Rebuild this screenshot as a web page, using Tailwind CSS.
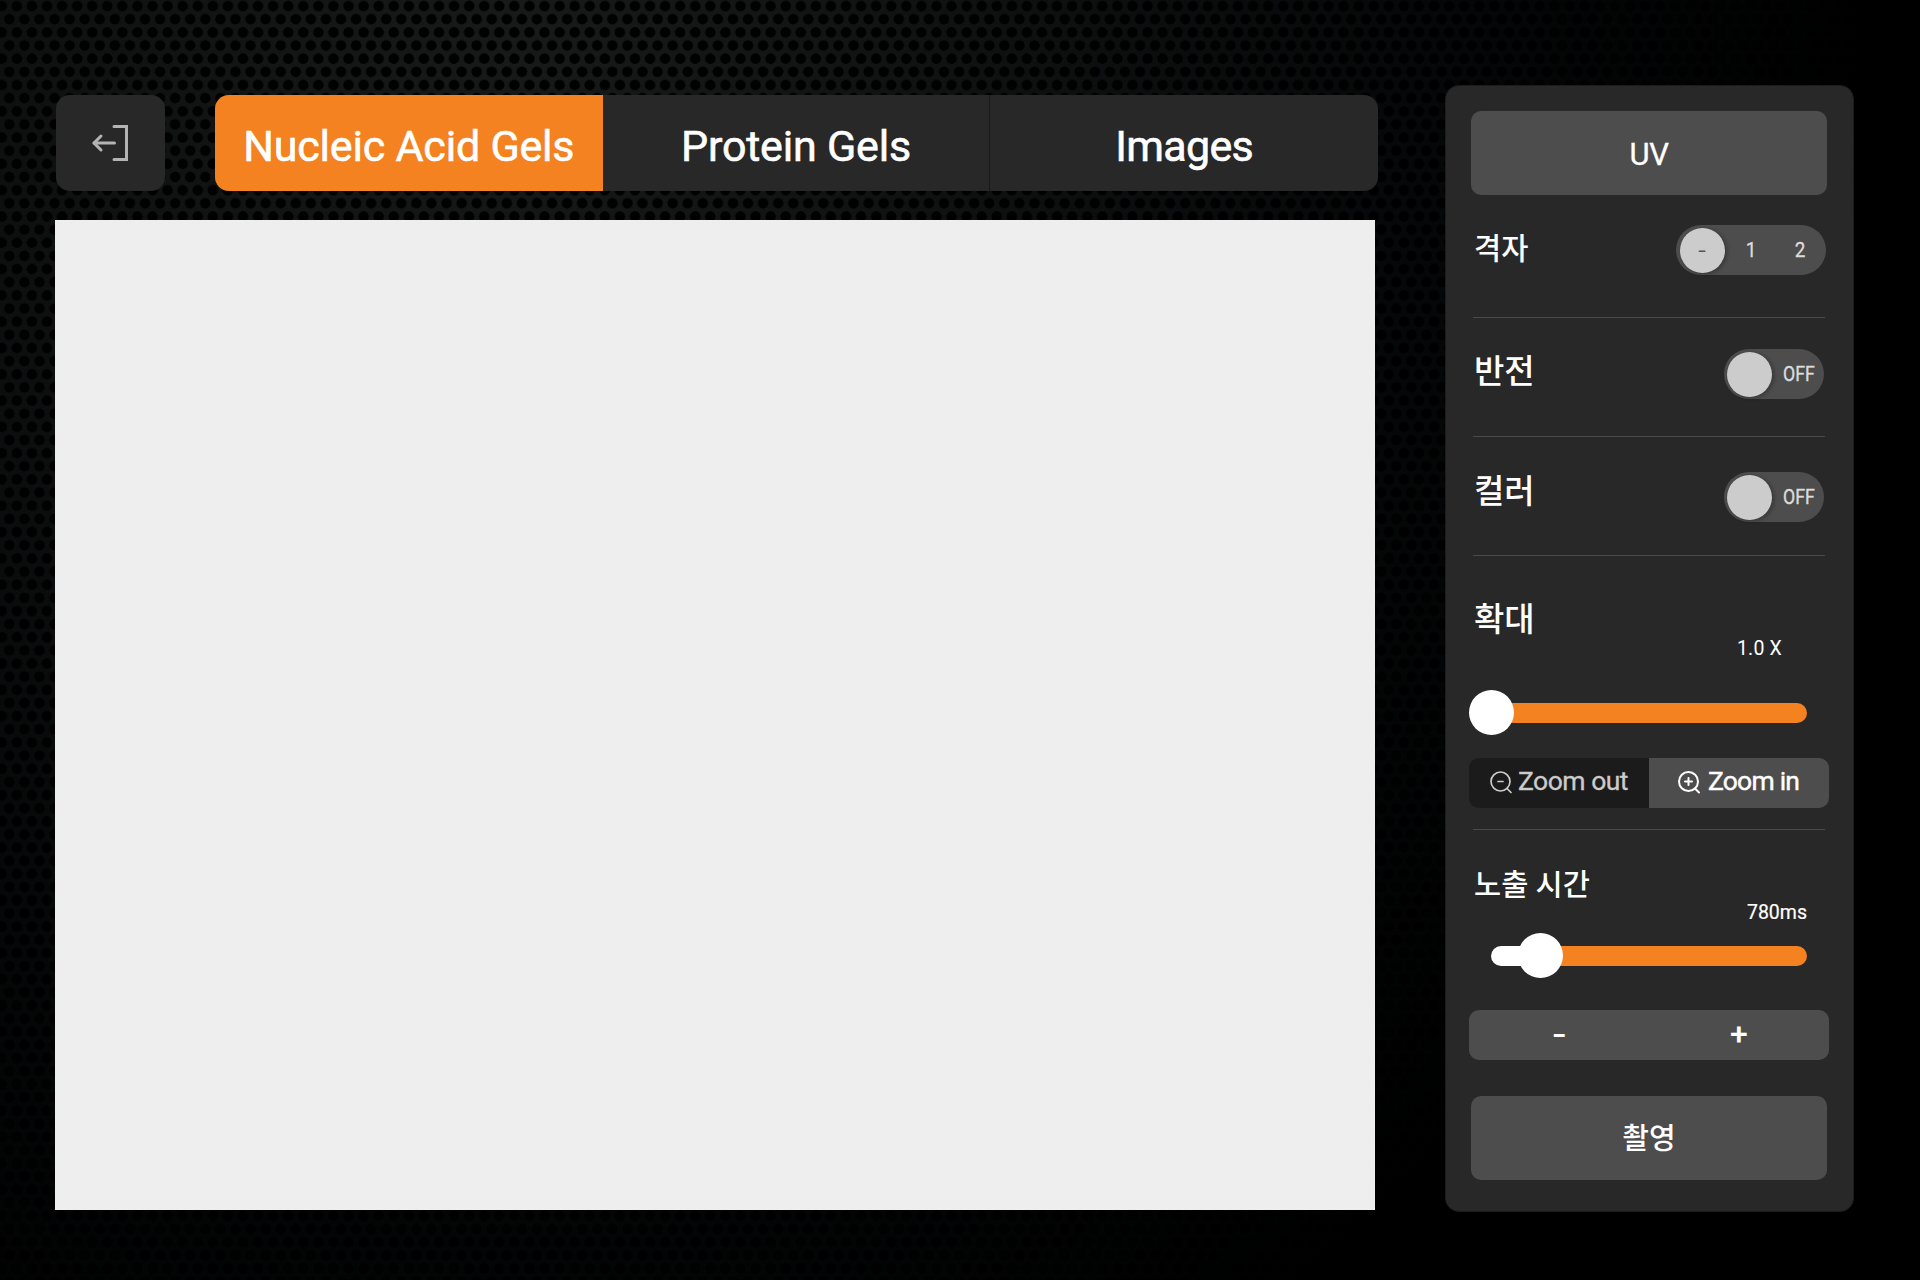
<!DOCTYPE html>
<html lang="ko">
<head>
<meta charset="utf-8">
<title>Gel Imager</title>
<script src="https://cdn.jsdelivr.net/npm/@tailwindcss/browser@4"></script>
</head>
<body class="bg-black">
<div class="relative flex h-[1280px] w-[1920px] overflow-hidden bg-black font-['Roboto','Noto_Sans_CJK_KR',sans-serif] leading-none text-white">
  <!-- perforated metal backdrop -->
  <svg class="absolute inset-0" width="1920" height="1280" aria-hidden="true">
    <defs>
      <radialGradient id="glow" gradientUnits="userSpaceOnUse" cx="0" cy="0" r="1" gradientTransform="translate(520 20) scale(1350 1560)">
        <stop offset="0" stop-color="#181919"/>
        <stop offset="0.36" stop-color="#0f1111"/>
        <stop offset="0.68" stop-color="#050708"/>
        <stop offset="1" stop-color="#000"/>
      </radialGradient>
      <pattern id="holes" patternUnits="userSpaceOnUse" x="9.3" y="-7.1" width="15.076" height="26.3">
        <circle cx="7.54" cy="13.15" r="5.3"/>
        <circle cx="0" cy="0" r="5.3"/><circle cx="15.076" cy="0" r="5.3"/>
        <circle cx="0" cy="26.3" r="5.3"/><circle cx="15.076" cy="26.3" r="5.3"/>
      </pattern>
    </defs>
    <rect width="1920" height="1280" fill="url(#glow)"/>
    <rect width="1920" height="1280" fill="url(#holes)"/>
  </svg>

  <main class="relative ml-[55px] w-[1323px] pt-[95px]">
    <div class="flex h-24 pl-px">
      <button class="flex w-[109px] items-center justify-center rounded-[14px] bg-[#282828] pr-0.5">
        <svg width="38" height="38" viewBox="0 0 38 38" fill="none" stroke="#b4b4b4" stroke-width="3" stroke-linecap="round" stroke-linejoin="miter">
          <path d="M23 2.5H35.5V35.5H23"/><path d="M23.5 19H3"/><path d="M10 12L3 19L10 26" stroke-linejoin="round"/>
        </svg>
      </button>
      <nav class="ml-[50px] grid w-[1163px] grid-cols-3 overflow-hidden rounded-[14px] bg-[#282828] text-[43px] tracking-[-0.2px] [-webkit-text-stroke:0.6px_white]">
        <button class="bg-[#f48221] pt-1.5">Nucleic Acid Gels</button>
        <button class="border-r border-[#181818] pt-1.5">Protein Gels</button>
        <button class="pt-1.5 tracking-[-0.7px]">Images</button>
      </nav>
    </div>
    <div class="mt-[29px] h-[990px] w-[1320px] bg-[#eeeeee]"></div>
  </main>

  <aside class="relative isolate mt-[85px] ml-[67px] flex h-[1127px] w-[409px] flex-col rounded-[14px] border border-[#1c1c1c] bg-[#282828] pt-[25px] pr-6 pl-[23px]">
    <button class="mx-0.5 h-[84px] shrink-0 rounded-[10px] bg-[#4d4d4d] pt-0.5 text-[31px] tracking-[-0.5px] [-webkit-text-stroke:0.3px_white]">UV</button>
    <div class="mx-1 flex h-[122px] shrink-0 justify-between pt-[30px]">
      <span class="mt-[10px] ml-px text-[29.5px] font-medium">격자</span>
      <div class="-mr-px grid h-[50px] w-[150px] grid-cols-3 items-center rounded-full bg-[#4d4d4d] text-center text-[21px] text-[#dcdcdc]">
        <span class="ml-[3.5px] flex size-[45px] items-center justify-center rounded-full bg-[#cccccc] text-[#555] shadow-[2px_1px_4px_rgba(0,0,0,0.3)]"><span class="scale-x-[1.3]">-</span></span>
        <span class="scale-x-90 [-webkit-text-stroke:0.3px_#dcdcdc]">1</span><span class="-ml-0.5 scale-x-90 [-webkit-text-stroke:0.3px_#dcdcdc]">2</span>
      </div>
    </div>
    <div class="mx-1 h-px shrink-0 bg-[#4a4a4a]"></div>
    <div class="mx-1 flex h-[118px] shrink-0 justify-between pt-[31px]">
      <span class="mt-[6px] ml-px text-[33px] font-medium">반전</span>
      <div class="mr-px flex h-[50px] w-[100px] items-center rounded-full bg-[#4d4d4d] pl-[2.5px] text-[21px] text-[#dcdcdc]">
        <span class="size-[45px] shrink-0 rounded-full bg-[#cccccc] shadow-[2px_1px_4px_rgba(0,0,0,0.3)]"></span>
        <span class="ml-[11px] origin-left scale-x-[0.84] [-webkit-text-stroke:0.4px_#dcdcdc]">OFF</span>
      </div>
    </div>
    <div class="mx-1 h-px shrink-0 bg-[#4a4a4a]"></div>
    <div class="mx-1 flex h-[118px] shrink-0 justify-between pt-[35px]">
      <span class="mt-[3px] ml-px text-[33px] font-medium">컬러</span>
      <div class="mr-px flex h-[50px] w-[100px] items-center rounded-full bg-[#4d4d4d] pl-[2.5px] text-[21px] text-[#dcdcdc]">
        <span class="size-[45px] shrink-0 rounded-full bg-[#cccccc] shadow-[2px_1px_4px_rgba(0,0,0,0.3)]"></span>
        <span class="ml-[11px] origin-left scale-x-[0.84] [-webkit-text-stroke:0.4px_#dcdcdc]">OFF</span>
      </div>
    </div>
    <div class="mx-1 h-px shrink-0 bg-[#4a4a4a]"></div>
    <div class="mx-1 flex h-[134px] shrink-0 justify-between pt-[47px]">
      <span class="ml-px text-[33px] font-medium">확대</span>
      <span class="mt-[36px] mr-[43px] text-[19.5px] tracking-[0.2px]">1.0 X</span>
    </div>
    <div class="flex h-[45px] w-[338px] shrink-0 items-center">
      <span class="size-[45px] rounded-full bg-white"></span>
      <span class="relative -z-10 -ml-2 h-5 flex-1 rounded-r-full bg-[#f48221]"></span>
    </div>
    <div class="mt-[23px] grid h-[50px] shrink-0 grid-cols-2 overflow-hidden rounded-[10px] text-[26.5px]">
      <button class="flex items-center bg-[#1b1b1b] pb-[3px] pl-5 text-[#cccccc]">
        <svg width="24" height="24" viewBox="0 0 24 24" fill="none" stroke="currentColor" stroke-width="1.7" stroke-linecap="round"><circle cx="11.5" cy="11.5" r="9.5"/><path d="M18 18.5L22 22.5M9 11.5H14"/></svg>
        <span class="ml-[5px] text-nowrap tracking-[-0.5px] [-webkit-text-stroke:0.3px_#cccccc]">Zoom out</span>
      </button>
      <button class="flex items-center bg-[#4d4d4d] pb-[3px] pl-7">
        <svg width="24" height="24" viewBox="0 0 24 24" fill="none" stroke="currentColor" stroke-width="2" stroke-linecap="round"><circle cx="11.5" cy="11.5" r="9.5"/><path d="M18 18.5L22 22.5M8 11.5H15M11.5 8V15"/></svg>
        <span class="ml-[7px] text-nowrap tracking-[-0.8px] [-webkit-text-stroke:0.4px_white]">Zoom in</span>
      </button>
    </div>
    <div class="mx-1 mt-[21px] h-px shrink-0 bg-[#4a4a4a]"></div>
    <div class="mx-1 flex h-[103px] shrink-0 justify-between pt-[41px]">
      <span class="ml-px text-[29.5px] font-medium">노출 시간</span>
      <span class="mt-[32px] mr-[18px] text-[19.5px] [-webkit-text-stroke:0.2px_white]">780ms</span>
    </div>
    <div class="ml-[22px] flex h-[45px] w-[316px] shrink-0 items-center">
      <span class="h-5 w-[35px] rounded-l-full bg-white"></span>
      <span class="-ml-2 size-[45px] rounded-full bg-white"></span>
      <span class="relative -z-10 -ml-2 h-5 flex-1 rounded-r-full bg-[#f48221]"></span>
    </div>
    <div class="mt-[32px] grid h-[50px] shrink-0 grid-cols-2 overflow-hidden rounded-[10px] bg-[#4d4d4d] text-[32px] font-medium">
      <button class="pb-0.5"><span class="inline-block scale-x-[1.3]">-</span></button>
      <button class="pb-0.5">+</button>
    </div>
    <button class="mx-0.5 mt-[36px] h-[84px] shrink-0 rounded-[10px] bg-[#4d4d4d] pt-[3px] text-[29px] font-medium">촬영</button>
  </aside>
</div>
</body>
</html>
